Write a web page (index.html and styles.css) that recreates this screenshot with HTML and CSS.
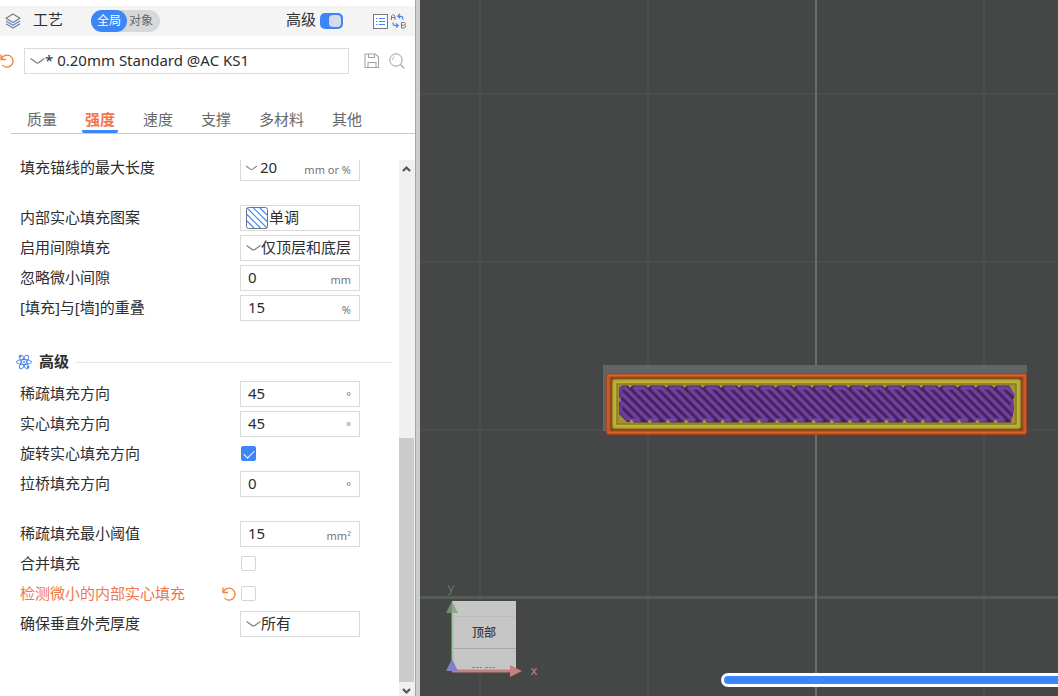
FILE: index.html
```
<!DOCTYPE html>
<html lang="zh-CN">
<head>
    <meta charset="UTF-8">
    <meta name="viewport" content="width=device-width, initial-scale=1.0">
    <title>工艺</title>
    <link rel="stylesheet" href="styles.css">
</head>
<body>
    <!-- Shared icons -->
    <svg class="defs" width="0" height="0" aria-hidden="true">
        <symbol id="chevron" viewBox="0 0 14 8">
            <path d="M0.500 1.800 L6 5.800 Q7 6.500 8 5.800 L13.500 1.800" fill="none" stroke="#7c8083" stroke-width="1.300" stroke-linecap="round"/>
        </symbol>
        <symbol id="undo" viewBox="0 0 14 14">
            <path d="M1 1 V5.500 H5.500 M1.300 5.200 A6 6 0 1 1 2.800 11.400" fill="none" stroke="#f5822f" stroke-width="1.300" stroke-linecap="round"/>
        </symbol>
    </svg>

    <div class="app">
        <aside class="sidebar">
            <header class="titlebar">
                <svg class="icon-layers" viewBox="0 0 16 16" width="16" height="16">
                    <g fill="none" stroke-width="1.100" stroke-linejoin="round">
                        <path d="M8 1 L15 5.300 L8 9.500 L1 5.300 Z" stroke="#75797c"/>
                        <path d="M1 8 L8 12.200 L15 8" stroke="#3d86f7"/>
                        <path d="M1 10.700 L8 15 L15 10.700" stroke="#75797c"/>
                    </g>
                </svg>
                <h1 class="title">工艺</h1>
                <div class="scope">
                    <button class="scope-btn active" type="button">全局</button>
                    <button class="scope-btn" type="button">对象</button>
                </div>
                <div class="titlebar-right">
                    <label for="advanced">高级</label>
                    <input class="switch" type="checkbox" id="advanced" checked>
                    <button class="icon-btn list-btn" type="button" aria-label="参数列表">
                        <svg viewBox="0 0 15 15" width="15" height="15">
                            <rect x="0.500" y="0.500" width="14" height="14" fill="#fff" stroke="#75797c"/>
                            <path d="M3 4.500h1.500M3 7.500h1.500M3 10.500h1.500M6 4.500h6M6 7.500h6M6 10.500h6" stroke="#3d86f7"/>
                        </svg>
                    </button>
                    <button class="icon-btn" type="button" aria-label="比较预设">
                        <svg viewBox="0 0 17 16" width="17" height="16">
                            <g fill="none" stroke="#75797c">
                                <path d="M1.500 7 V3 L3 1.500 H3.500 L5 3 V7 M1.500 4.500 H5"/>
                                <path d="M11.500 9.500 V15 M11.500 9.500 H14.500 L15.500 10.500 V11.500 L14.500 12.200 L15.500 13 V14 L14.500 15 H11.500 M11.500 12.200 H14.500"/>
                            </g>
                            <path d="M10 1 L7.800 3.300 L10 5.300 M8 3.300 H11 Q13 3.300 13 6.500" fill="none" stroke="#3d86f7" stroke-width="1.200"/>
                            <path d="M3 9.500 Q3 12.500 5 12.500 H8 M6 10.500 L8.200 12.500 L6 14.500" fill="none" stroke="#3d86f7" stroke-width="1.200"/>
                        </svg>
                    </button>
                </div>
            </header>

            <div class="preset">
                <button class="icon-btn" type="button" aria-label="还原预设"><svg class="undo"><use href="#undo"/></svg></button>
                <div class="field preset-field">
                    <svg class="chevron"><use href="#chevron"/></svg>
                    <select aria-label="预设"><option>* 0.20mm Standard @AC KS1</option></select>
                </div>
                <button class="icon-btn save-btn" type="button" aria-label="保存">
                    <svg viewBox="0 0 16 16" width="16" height="16">
                        <path d="M1.500 1 H11.500 L14.500 4 V14.500 H1 V1.500 Z M4.500 1 V4.500 H10.500 V1 M4 14.500 V9.500 H12 V14.500" fill="none" stroke="#a3a6a8" stroke-width="1.100"/>
                    </svg>
                </button>
                <button class="icon-btn" type="button" aria-label="搜索">
                    <svg viewBox="0 0 16 16" width="16" height="16">
                        <circle cx="7" cy="7" r="6.200" fill="none" stroke="#999c9e"/>
                        <path d="M3.500 7 A3.500 3.500 0 0 1 5.500 3.800" fill="none" stroke="#b5b8ba"/>
                        <path d="M11.500 11.500 L15.300 15.300" stroke="#999c9e" stroke-width="1.200"/>
                    </svg>
                </button>
            </div>

            <nav class="tabs">
                <a href="#quality">质量</a>
                <a class="active" href="#strength">强度</a>
                <a href="#speed">速度</a>
                <a href="#support">支撑</a>
                <a href="#multi">多材料</a>
                <a href="#other">其他</a>
            </nav>

            <div class="scroll">
                <form class="settings">
                    <div class="group">
                        <div class="row">
                            <label for="anchor">填充锚线的最大长度</label>
                            <div class="field"><svg class="chevron small"><use href="#chevron"/></svg><input type="text" id="anchor" value="20"><span class="unit">mm or %</span></div>
                        </div>
                    </div>

                    <div class="group">
                        <div class="row">
                            <label for="pattern">内部实心填充图案</label>
                            <div class="field">
                                <svg class="pattern-icon" viewBox="0 0 22 22">
                                    <rect x="0.500" y="0.500" width="21" height="21" rx="2" fill="#fff" stroke="#6f7478"/>
                                    <path d="M1 14 L8 21 M1 7.500 L14.500 21 M1 1 L21 21 M7.500 1 L21 14.500 M14 1 L21 8" stroke="#3d86f7" stroke-width="1.100"/>
                                </svg>
                                <select id="pattern"><option>单调</option></select>
                            </div>
                        </div>
                        <div class="row">
                            <label for="gap">启用间隙填充</label>
                            <div class="field"><svg class="chevron"><use href="#chevron"/></svg><select id="gap"><option>仅顶层和底层</option></select></div>
                        </div>
                        <div class="row">
                            <label for="tiny">忽略微小间隙</label>
                            <div class="field text"><input type="text" id="tiny" value="0"><span class="unit">mm</span></div>
                        </div>
                        <div class="row">
                            <label for="overlap">[填充]与[墙]的重叠</label>
                            <div class="field text"><input type="text" id="overlap" value="15"><span class="unit">%</span></div>
                        </div>
                    </div>

                    <h2 class="section">
                        <svg viewBox="0 0 16 16" width="16" height="16">
                            <g fill="none" stroke="#3d86f7">
                                <ellipse cx="8" cy="8" rx="7.500" ry="2.500"/>
                                <ellipse cx="8" cy="8" rx="7.500" ry="2.500" transform="rotate(60 8 8)" stroke="#7593ba"/>
                                <ellipse cx="8" cy="8" rx="7.500" ry="2.500" transform="rotate(120 8 8)"/>
                            </g>
                            <g fill="#3d86f7">
                                <circle cx="8" cy="8" r="1"/>
                                <circle cx="4" cy="2.500" r="1.300"/>
                                <circle cx="12" cy="13" r="1.300"/>
                            </g>
                        </svg>
                        <span>高级</span>
                    </h2>

                    <div class="group">
                        <div class="row">
                            <label for="sparse">稀疏填充方向</label>
                            <div class="field text"><input type="text" id="sparse" value="45"><span class="unit">°</span></div>
                        </div>
                        <div class="row">
                            <label for="solid">实心填充方向</label>
                            <div class="field text"><input type="text" id="solid" value="45"><span class="unit">°</span></div>
                        </div>
                        <div class="row">
                            <label for="rotate">旋转实心填充方向</label>
                            <input class="check" type="checkbox" id="rotate" checked>
                        </div>
                        <div class="row">
                            <label for="bridge">拉桥填充方向</label>
                            <div class="field text"><input type="text" id="bridge" value="0"><span class="unit">°</span></div>
                        </div>
                    </div>

                    <div class="group">
                        <div class="row">
                            <label for="threshold">稀疏填充最小阈值</label>
                            <div class="field text"><input type="text" id="threshold" value="15"><span class="unit">mm²</span></div>
                        </div>
                        <div class="row">
                            <label for="combine">合并填充</label>
                            <input class="check" type="checkbox" id="combine">
                        </div>
                        <div class="row changed">
                            <label for="detect">检测微小的内部实心填充</label>
                            <button class="icon-btn" type="button" aria-label="还原"><svg class="undo"><use href="#undo"/></svg></button>
                            <input class="check" type="checkbox" id="detect">
                        </div>
                        <div class="row">
                            <label for="shell">确保垂直外壳厚度</label>
                            <div class="field"><svg class="chevron"><use href="#chevron"/></svg><select id="shell"><option>所有</option></select></div>
                        </div>
                    </div>
                </form>

                <div class="scrollbar">
                    <button type="button" aria-label="向上滚动"><svg viewBox="0 0 15 14"><path d="M4 11 L7.500 7.500 L11 11" fill="none" stroke="#555" stroke-width="2.200"/></svg></button>
                    <div class="track"><div class="thumb"></div></div>
                    <button type="button" aria-label="向下滚动"><svg viewBox="0 0 15 14"><path d="M4 7 L7.500 10.500 L11 7" fill="none" stroke="#555" stroke-width="2.200"/></svg></button>
                </div>
            </div>
        </aside>

        <div class="splitter"></div>

        <main class="viewport">
            <svg class="scene" viewBox="0 0 638 696" preserveAspectRatio="xMinYMin slice">
                <defs>
                    <!-- One loop of solid infill, repeated along the part -->
                    <pattern id="infill" x="210" y="385" width="18.200" height="38" patternUnits="userSpaceOnUse">
                        <rect width="19" height="38" fill="#3b2252"/>
                        <g fill="none" stroke-linejoin="round">
                            <path d="M4.500 3h9.100l32 32h-9.100z M-13.700 3h9.100l32 32h-9.100z M-31.900 3h9.100l32 32h-9.100z" stroke="#5b3180" stroke-width="4.600"/>
                            <path d="M4.500 3h9.100l32 32h-9.100z M-13.700 3h9.100l32 32h-9.100z M-31.900 3h9.100l32 32h-9.100z" stroke="#7641a4" stroke-width="2.400"/>
                        </g>
                        <path d="M0 0h2.500l-2.500 3z M18.200 0h-2.500l2.500 3z M-1 38l2.500-3.500 2.500 3.500z" fill="#b3a233"/>
                    </pattern>
                </defs>

                <!-- Build plate grid -->
                <g stroke="#50544f">
                    <path d="M60 0V696M228 0V696M564 0V696M0 94H638M0 262H638M0 430H638"/>
                    <path d="M0 597.500H638" stroke="#555c56" stroke-width="3"/>
                </g>
                <path d="M396 0V696" stroke="#6b6e69" stroke-width="2"/>

                <!-- Sliced part -->
                <path d="M183 365H607V431H183Z" fill="#626566"/>
                <g fill="none" stroke-linejoin="round">
                    <rect x="189" y="376" width="415" height="56" stroke="#803a18" stroke-width="6"/>
                    <rect x="188.500" y="375.500" width="416" height="57" stroke="#bb5526" stroke-width="4"/>
                    <rect x="188" y="375.500" width="417" height="57" stroke="#d0672f" stroke-width="1"/>
                    <rect x="194.500" y="381.500" width="404" height="45" fill="#a5942d" stroke="#7b6f20" stroke-width="6"/>
                    <rect x="194.500" y="381.500" width="404" height="45" stroke="#b5a431" stroke-width="4"/>
                    <rect x="195" y="382" width="403" height="44" stroke="#cdbb43" stroke-width="1"/>
                </g>
                <path d="M199 388L202 385.500H589L595 395L593 400L594 410L591 422.500H212L207 422L199 414V402L201 400L199 397Z" fill="url(#infill)"/>
                <path d="M201 398V388H204M201 404V413L208 420M592 400V413" fill="none" stroke="#6b3996" stroke-width="3"/>

                <!-- View cube and axes -->
                <rect x="32" y="601" width="64" height="70" fill="#c6c6c6"/>
                <path d="M32 616.500H96" stroke="#bdbdbd"/>
                <path d="M32 648.500H96" stroke="#aaa"/>
                <path d="M52 667.500H62M65 667.500H75" stroke="#888" stroke-dasharray="3 1"/>
                <text class="cube-label" x="64" y="637" text-anchor="middle">顶部</text>
                <path d="M32.500 612V671" stroke="#9dc39d" stroke-width="2"/>
                <path d="M26 613L32 601L38 613Z" fill="#7fa07f" fill-opacity="0.800"/>
                <path d="M32 671H91" stroke="#c77f7f" stroke-width="3"/>
                <path d="M90 665L102 671L90 677Z" fill="#c77f7f"/>
                <path d="M26 671L32 659L38 671Z" fill="#8080c4"/>
                <text class="axis" x="31" y="592" text-anchor="middle" fill="#5e755e">y</text>
                <text class="axis" x="114" y="675" text-anchor="middle" fill="#c77f7f">x</text>
            </svg>
            <input class="move-slider" type="range" aria-label="移动" value="100">
        </main>
    </div>
</body>
</html>
```
FILE: styles.css
```
/* General styling */
* {
    box-sizing: border-box;
}

body {
    margin: 0;
    font-family: "Noto Sans", "Noto Sans CJK SC", sans-serif;
    font-size: 15px;
    color: #2c2e30;
    background-color: #fff;
}

button, input, select {
    margin: 0;
    padding: 0;
    border: none;
    background: none;
    color: inherit;
    font: inherit;
}

.defs {
    position: absolute;
}

svg {
    display: block;
    flex: none;
}

.app {
    display: flex;
    height: 100vh;
    overflow: hidden;
}

.sidebar {
    display: flex;
    flex-direction: column;
    flex: none;
    width: 415px;
    padding-top: 6px;
}

.splitter {
    flex: none;
    width: 5px;
    background-color: #cdcdcd;
    border-left: 1px solid #a5a5a5;
}

.icon-btn {
    display: block;
    flex: none;
    cursor: pointer;
}

/* Title bar */
.titlebar {
    display: flex;
    align-items: center;
    flex: none;
    height: 30px;
    padding: 0 8px 0 5px;
    background-color: #f4f4f4;
}

.title {
    margin: 0 28px 0 12px;
    font-size: 15px;
    font-weight: 400;
    line-height: 26px;
    padding-bottom: 4px;
}

.scope {
    display: flex;
    border-radius: 11px;
    background-color: #d8d8d8;
}

.scope-btn {
    height: 22px;
    padding: 0 7px 0 2px;
    border-radius: 11px;
    font-size: 12px;
    line-height: 20px;
    color: #666;
}

.scope-btn.active {
    padding: 0 6px;
    background-color: #3d86f7;
    color: #fff;
}

.titlebar-right {
    display: flex;
    align-items: center;
    margin-left: auto;
}

.titlebar-right label {
    line-height: 26px;
    padding-bottom: 4px;
}

.switch {
    appearance: none;
    display: flex;
    justify-content: flex-end;
    width: 23px;
    height: 16px;
    margin: 0 30px 0 4px;
    padding: 2px;
    border-radius: 5px;
    background-color: #3d86f7;
}

.switch::before {
    content: "";
    width: 12px;
    height: 12px;
    border-radius: 4px;
    background-color: #d5dce8;
}

.list-btn {
    margin-right: 2px;
}

/* Preset picker */
.preset {
    display: flex;
    align-items: center;
    flex: none;
    height: 50px;
    padding-right: 10px;
}

.undo {
    width: 14px;
    height: 14px;
}

.preset-field {
    flex: 1;
    margin: 0 15px 0 10px;
}

.save-btn {
    margin-right: 9px;
}

/* Tabs */
.tabs {
    display: flex;
    flex: none;
    gap: 22px;
    height: 28px;
    margin: 20px 0 0 11px;
    padding-left: 13px;
    border-bottom: 1px solid #c8c8c8;
}

.tabs a {
    height: 27px;
    padding: 0 3px;
    border-bottom: 3px solid transparent;
    line-height: 26px;
    color: #66696b;
    text-decoration: none;
}

.tabs a.active {
    color: #f2754e;
    font-weight: 700;
    border-color: #3d86f7;
    border-radius: 2px;
}

/* Settings list */
.scroll {
    display: flex;
    flex: 1;
    min-height: 0;
    margin-top: 26px;
    overflow: hidden;
}

.settings {
    flex: 1;
    margin-top: -7px;
}

.group {
    margin-bottom: 20px;
}

.row {
    display: flex;
    align-items: center;
    height: 30px;
    padding-left: 20px;
}

.row label {
    flex: none;
    width: 220px;
    padding-bottom: 2px;
    line-height: 16px;
}

.row.changed label {
    width: 202px;
    color: #f2754e;
}

.row.changed .icon-btn {
    margin-right: 4px;
}

.field {
    display: flex;
    align-items: center;
    height: 26px;
    padding: 0 8px 0 5px;
    border: 1px solid #dbdbdb;
    background-color: #fff;
}

.row .field {
    width: 120px;
}

.field.text {
    padding-left: 7px;
}

.field select {
    appearance: none;
    flex: 1;
    min-width: 0;
    padding-bottom: 2px;
    line-height: 22px;
    overflow: visible;
    text-overflow: clip;
}

.row select {
    margin-right: -8px;
}

.field input {
    flex: 1;
    width: 20px;
    height: 24px;
    padding-bottom: 2px;
}

.chevron {
    width: 15px;
    height: 8px;
}

.chevron.small {
    width: 11px;
    margin-right: 3px;
}

.pattern-icon {
    width: 22px;
    height: 22px;
    margin-right: 1px;
}

.unit {
    padding-top: 4px;
    font-size: 11px;
    line-height: 16px;
    color: #757575;
}

.check {
    appearance: none;
    width: 15px;
    height: 15px;
    margin: 0 0 2px 1px;
    border: 1px solid #d6d6d6;
    border-radius: 2px;
    background-color: #fff;
}

.check:checked {
    border-color: #3d86f7;
    background-color: #3d86f7;
}

.check:checked::before {
    content: "";
    display: block;
    width: 9px;
    height: 5px;
    margin: 3px 2px;
    border: solid #fff;
    border-width: 0 0 1px 1px;
    transform: rotate(-45deg);
}

.section {
    display: flex;
    align-items: center;
    height: 56px;
    margin: -20px 7px 0 16px;
    padding-top: 22px;
    font-size: 15px;
    font-weight: 700;
    line-height: 24px;
}

.section span {
    margin: 0 6px 0 7px;
    padding-bottom: 2px;
}

.section::after {
    content: "";
    flex: 1;
    height: 1px;
    background-color: #e6e6e6;
}

/* Scrollbar */
.scrollbar {
    display: flex;
    flex-direction: column;
    width: 16px;
    padding-right: 1px;
    background-color: #f0f0f0;
}

.scrollbar button {
    flex: none;
    height: 14px;
}

.track {
    display: flex;
    flex-direction: column;
    justify-content: flex-end;
    flex: 1;
}

.thumb {
    height: 48%;
    background-color: #cbcbcb;
}

/* 3D preview */
.viewport {
    position: relative;
    flex: 1;
    overflow: hidden;
    background-color: #444745;
}

.scene {
    width: 100%;
    height: 100%;
}

.cube-label {
    font-size: 12px;
    font-weight: 500;
    fill: #3b3b3b;
}

.axis {
    font-size: 13px;
}

.move-slider {
    appearance: none;
    position: absolute;
    left: 301px;
    bottom: 9px;
    height: 14px;
    width: 100%;
    border: 3px solid #fff;
    border-radius: 7px;
    background-color: #3d86f7;
}

.move-slider::-webkit-slider-thumb {
    appearance: none;
    width: 1px;
    height: 8px;
}
```
